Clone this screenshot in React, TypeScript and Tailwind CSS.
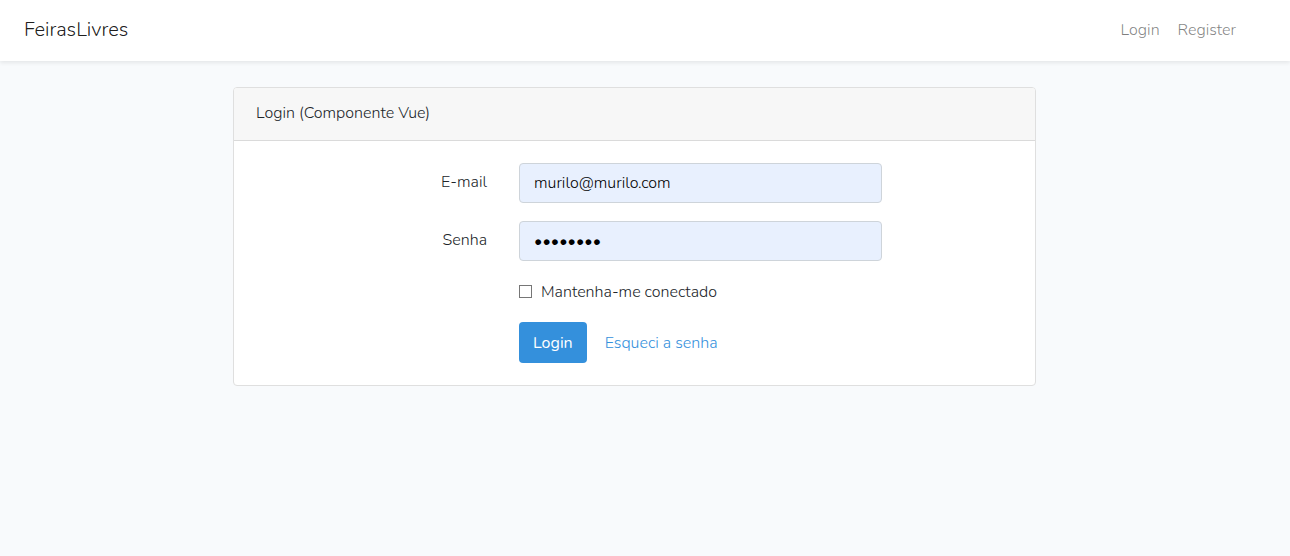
import React from 'react';

const inputClass =
  'block h-10 w-full rounded border border-[#ced4da] bg-[#e8f0fe] px-[14px] text-black outline-none focus:border-[#a1cbef]';

export default function App() {
  return (
    <div className="min-h-screen bg-[#f8fafc] font-['Nunito','Open_Sans',sans-serif] text-[16px] leading-6 font-light text-[#212529]">
      <nav className="flex h-[61px] items-center justify-between bg-white pb-[2px] pl-6 pr-[54px] shadow-[0_2px_4px_rgba(0,0,0,0.08)]">
        <a href="#" className="text-[20px] text-black/90">FeirasLivres</a>
        <div className="flex gap-[18px] text-black/50">
          <a href="#">Login</a>
          <a href="#">Register</a>
        </div>
      </nav>
      <main className="pt-[26px] pr-[21px]">
        <section className="mx-auto w-full max-w-[803px] rounded border border-[#dfdfdf] bg-white">
          <h1 className="rounded-t-[3px] border-b border-[#dadada] bg-[#f7f7f7] px-[22px] pt-[13px] pb-[15px]">
            Login (Componente Vue)
          </h1>
          <form className="flex flex-col gap-[18px] px-[6px] py-[22px]" onSubmit={(e) => e.preventDefault()}>
            <div className="grid grid-cols-12">
              <label htmlFor="email" className="col-span-4 px-4 pt-[7px] text-right">E-mail</label>
              <div className="col-span-6 px-4">
                <input id="email" type="email" defaultValue="murilo@murilo.com" className={inputClass} />
              </div>
            </div>
            <div className="grid grid-cols-12">
              <label htmlFor="password" className="col-span-4 px-4 pt-[7px] text-right">Senha</label>
              <div className="col-span-6 px-4">
                <input id="password" type="password" defaultValue="12345678" className={inputClass} />
              </div>
            </div>
            <div className="grid grid-cols-12">
              <div className="col-span-6 col-start-5 flex h-[25px] items-center px-4">
                <input
                  id="remember"
                  type="checkbox"
                  className="size-[13px] appearance-none border border-[#767676] bg-white checked:bg-[#3490dc]"
                />
                <label htmlFor="remember" className="pl-[9px]">Mantenha-me conectado</label>
              </div>
            </div>
            <div className="grid grid-cols-12">
              <div className="col-span-8 col-start-5 flex items-center gap-[18px] px-4">
                <button type="submit" className="h-[41px] rounded bg-[#3490dc] px-[14px] font-normal text-white">
                  Login
                </button>
                <a href="#" className="text-[#3490dc]">Esqueci a senha</a>
              </div>
            </div>
          </form>
        </section>
      </main>
    </div>
  );
}
